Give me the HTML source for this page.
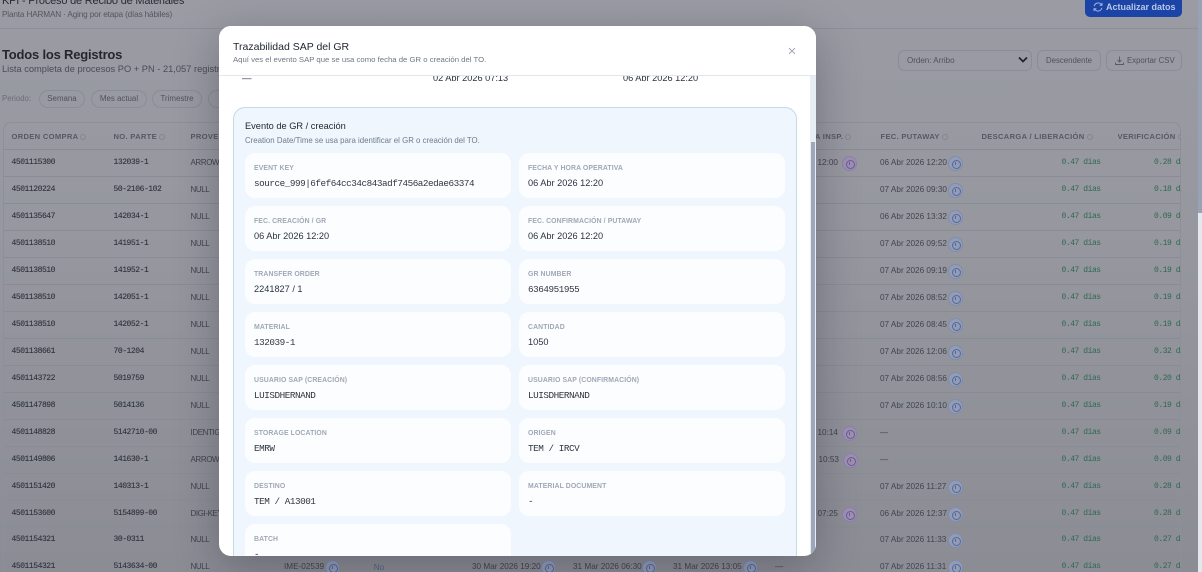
<!DOCTYPE html>
<html lang="es"><head><meta charset="utf-8"><title>Trazabilidad SAP del GR</title>
<style>
html,body{margin:0;padding:0;width:1202px;height:572px;overflow:hidden;background:#989aa3}
body{font-family:"Liberation Sans",sans-serif;position:relative}
*{box-sizing:border-box}
.a{position:absolute;white-space:nowrap}
#bg{position:absolute;left:0;top:0;width:1198px;height:572px;overflow:hidden;background:linear-gradient(#9a9ba3,#96979f 40%,#8b8c94);filter:blur(.35px)}
#sb{position:absolute;left:1198px;top:0;width:4px;height:572px;background:#e4e8ee}
#sbt{position:absolute;left:1198px;top:0;width:4px;height:213px;background:#99a2b4}
.t{color:#41444e;font-size:8.2px;margin-top:.5px}
.pill{position:absolute;top:90px;height:18px;border:1px solid #8a8d98;border-radius:9px;font-size:7.9px;line-height:16px;text-align:center;color:#4f525d}
.btn{position:absolute;top:50px;height:21px;border:1px solid #8a8d98;border-radius:6px;font-size:7.8px;line-height:19px;color:#4f525d;text-align:center}
#tb{position:absolute;left:3px;top:122px;width:1178px;height:450px;border:1px solid #8d8f99;border-bottom:0;border-radius:8px 8px 0 0;overflow:hidden}
.hd{position:absolute;top:132px;font-size:7.6px;font-weight:bold;letter-spacing:.3px;color:#565964;white-space:nowrap}
.ln{position:absolute;left:4px;width:1176px;height:1px;background:#8a8c95}
.c1,.c2,.dy{position:absolute;font-family:"Liberation Mono",monospace;font-size:8px;letter-spacing:-.45px;margin-top:1px;white-space:nowrap}
.c1,.c2{color:#2f323b;-webkit-text-stroke:.1px currentColor}
.c1{left:11.5px}.c2{left:113.5px}
.c3{position:absolute;left:190.5px;font-size:8px;letter-spacing:-.4px;color:#41444e;white-space:nowrap;margin-top:.5px}
.d{position:absolute;left:880px;font-size:8.2px;color:#41444e;white-space:nowrap;margin-top:.5px}
.dy{color:#2e6a50}
.i{position:absolute;width:15px;height:15px;margin-top:1px;border-radius:50%;background:#929db5;border:1px solid #7f8db0}
.i:after{content:"";position:absolute;left:3px;top:3px;width:7px;height:7px;border:1px solid #5468a0;border-radius:50%}
.i:before{content:"";position:absolute;left:6px;top:5px;width:1px;height:3px;background:#5468a0}
.p{background:#9c92b0;border-color:#8f80ae}.p:after{border-color:#70589e}.p:before{background:#70589e}
.ic{display:inline-block;width:6px;height:6px;border:1px solid #84868f;border-radius:50%;margin-left:2px;vertical-align:-0.5px}
#modal{position:absolute;left:219px;top:26px;width:597px;height:530px;background:#fff;border-radius:12px;box-shadow:0 12px 45px rgba(15,15,30,.28);overflow:hidden}
#mh{position:absolute;left:0;top:0;width:597px;height:50px;background:#fff;border-bottom:1px solid #e3e7ec;z-index:3}
#track{position:absolute;left:591px;top:50px;width:6px;height:480px;background:#e8edf3}
#thumb{position:absolute;left:592px;top:116px;width:4px;height:414px;background:#9da8bb}
#panel{position:absolute;left:14px;top:81px;width:564px;height:449px;background:#eff6fe;border:1px solid #c3d9ec;border-bottom:0;border-radius:12px 12px 0 0;overflow:hidden}
.k{position:absolute;width:266px;height:45px;background:#fcfdff;border-radius:10px}
.k b{position:absolute;left:9px;top:12px;font-size:6.9px;letter-spacing:.1px;color:#a0a8b6;white-space:nowrap;font-weight:bold}
.k span{position:absolute;left:9px;top:25px;font-size:9.2px;color:#2b3340;white-space:nowrap}
.k span.m{font-family:"Liberation Mono",monospace;font-size:9.3px;letter-spacing:-.46px;top:25px;color:#30363f}
</style></head><body>
<div id="bg">
<div class="a" style="left:2px;top:-5px;font-size:11px;letter-spacing:-.2px;color:#2a2d36">KPI - Proceso de Recibo de Materiales</div>
<div class="a" style="left:2px;top:10px;font-size:8.2px;letter-spacing:-.15px;color:#54575f">Planta HARMAN · Aging por etapa (días hábiles)</div>
<div class="a" style="left:0;top:28px;width:1198px;height:1px;background:#8d909a"></div>
<div class="a" style="left:1085px;top:-8px;width:97px;height:25px;background:#1b44a6;border-radius:5px"></div>
<svg class="a" style="left:1093px;top:2px" width="10" height="10" viewBox="0 0 10 10" fill="none" stroke="#9fb4e0" stroke-width="1"><path d="M1.2 4.2A3.9 3.9 0 0 1 8 2.3L9 3.3M8.8 5.8A3.9 3.9 0 0 1 2 7.7L1 6.7M9 .9v2.4H6.6M1 9.1V6.7h2.4"/></svg>
<div class="a" style="left:1106px;top:2px;font-size:9px;font-weight:bold;color:#b8c6e8">Actualizar datos</div>
<div class="a" style="left:2px;top:47px;font-size:13px;letter-spacing:-.2px;font-weight:bold;color:#25272f">Todos los Registros</div>
<div class="a" style="left:2px;top:64px;font-size:9.3px;color:#4a4d57">Lista completa de procesos PO + PN - 21,057 registros</div>
<div class="a" style="left:2px;top:94px;font-size:7.8px;color:#6a6d77">Periodo:</div>
<div class="pill" style="left:39px;width:46px">Semana</div>
<div class="pill" style="left:91px;width:56px">Mes actual</div>
<div class="pill" style="left:152px;width:50px">Trimestre</div>
<div class="pill" style="left:208px;width:50px">Último</div>
<div class="btn" style="left:898px;width:134px;text-align:left;padding-left:8px;font-size:8px">Orden: Arribo</div>
<svg class="a" style="left:1018px;top:56px" width="10" height="8" viewBox="0 0 10 8" fill="none" stroke="#23252d" stroke-width="1.8"><path d="M1 1.5l4 4 4-4"/></svg>
<div class="btn" style="left:1037px;width:64px">Descendente</div>
<div class="btn" style="left:1106px;width:76px;padding-left:20px;text-align:left">Exportar CSV</div>
<svg class="a" style="left:1115px;top:56px" width="9" height="9" viewBox="0 0 9 9" fill="none" stroke="#565964" stroke-width=".9"><path d="M4.5 0.5v5.5M2.5 4l2 2 2-2M.5 6.5v2h8v-2"/></svg>
<div id="tb"></div>
<div class="hd" style="left:11.5px">ORDEN COMPRA<i class="ic"></i></div>
<div class="hd" style="left:113.5px">NO. PARTE<i class="ic"></i></div>
<div class="hd" style="left:190.5px">PROVEEDOR</div>
<div class="hd" style="left:793px">FECHA INSP.<i class="ic"></i></div>
<div class="hd" style="left:880.5px">FEC. PUTAWAY<i class="ic"></i></div>
<div class="hd" style="left:981.5px">DESCARGA / LIBERACIÓN<i class="ic"></i></div>
<div class="hd" style="left:1117.5px;width:63px;overflow:hidden">VERIFICACIÓN<i class="ic"></i></div>
<div class="ln" style="top:149px"></div><div class="ln" style="top:176px"></div><div class="ln" style="top:203px"></div><div class="ln" style="top:230px"></div><div class="ln" style="top:257px"></div><div class="ln" style="top:284px"></div><div class="ln" style="top:311px"></div><div class="ln" style="top:338px"></div><div class="ln" style="top:365px"></div><div class="ln" style="top:392px"></div><div class="ln" style="top:419px"></div><div class="ln" style="top:446px"></div><div class="ln" style="top:473px"></div><div class="ln" style="top:500px"></div><div class="ln" style="top:527px"></div><div class="ln" style="top:554px"></div>

<div class="c1" style="top:157px">4501115300</div><div class="c2" style="top:157px">132039-1</div><div class="c3" style="top:157.5px">ARROW</div><div class="a t" style="left:758px;width:80px;text-align:right;top:157.5px">06 Abr 2026 12:00</div><div class="i p" style="left:842px;top:155px"></div><div class="d" style="top:157.5px">06 Abr 2026 12:20</div><div class="i" style="left:948px;top:155px"></div><div class="dy" style="left:1061.5px;top:157px">0.47 días</div><div class="dy" style="left:1154px;top:157px;width:27px;overflow:hidden">0.28 días</div>
<div class="c1" style="top:184px">4501120224</div><div class="c2" style="top:184px">50-2106-102</div><div class="c3" style="top:184.5px">NULL</div><div class="d" style="top:184.5px">07 Abr 2026 09:30</div><div class="i" style="left:948px;top:182px"></div><div class="dy" style="left:1061.5px;top:184px">0.47 días</div><div class="dy" style="left:1154px;top:184px;width:27px;overflow:hidden">0.18 días</div>
<div class="c1" style="top:211px">4501135647</div><div class="c2" style="top:211px">142034-1</div><div class="c3" style="top:211.5px">NULL</div><div class="d" style="top:211.5px">06 Abr 2026 13:32</div><div class="i" style="left:948px;top:209px"></div><div class="dy" style="left:1061.5px;top:211px">0.47 días</div><div class="dy" style="left:1154px;top:211px;width:27px;overflow:hidden">0.09 días</div>
<div class="c1" style="top:238px">4501138510</div><div class="c2" style="top:238px">141951-1</div><div class="c3" style="top:238.5px">NULL</div><div class="d" style="top:238.5px">07 Abr 2026 09:52</div><div class="i" style="left:948px;top:236px"></div><div class="dy" style="left:1061.5px;top:238px">0.47 días</div><div class="dy" style="left:1154px;top:238px;width:27px;overflow:hidden">0.19 días</div>
<div class="c1" style="top:265px">4501138510</div><div class="c2" style="top:265px">141952-1</div><div class="c3" style="top:265.5px">NULL</div><div class="d" style="top:265.5px">07 Abr 2026 09:19</div><div class="i" style="left:948px;top:263px"></div><div class="dy" style="left:1061.5px;top:265px">0.47 días</div><div class="dy" style="left:1154px;top:265px;width:27px;overflow:hidden">0.19 días</div>
<div class="c1" style="top:292px">4501138510</div><div class="c2" style="top:292px">142051-1</div><div class="c3" style="top:292.5px">NULL</div><div class="d" style="top:292.5px">07 Abr 2026 08:52</div><div class="i" style="left:948px;top:290px"></div><div class="dy" style="left:1061.5px;top:292px">0.47 días</div><div class="dy" style="left:1154px;top:292px;width:27px;overflow:hidden">0.19 días</div>
<div class="c1" style="top:319px">4501138510</div><div class="c2" style="top:319px">142052-1</div><div class="c3" style="top:319.5px">NULL</div><div class="d" style="top:319.5px">07 Abr 2026 08:45</div><div class="i" style="left:948px;top:317px"></div><div class="dy" style="left:1061.5px;top:319px">0.47 días</div><div class="dy" style="left:1154px;top:319px;width:27px;overflow:hidden">0.19 días</div>
<div class="c1" style="top:346px">4501138661</div><div class="c2" style="top:346px">70-1204</div><div class="c3" style="top:346.5px">NULL</div><div class="d" style="top:346.5px">07 Abr 2026 12:06</div><div class="i" style="left:948px;top:344px"></div><div class="dy" style="left:1061.5px;top:346px">0.47 días</div><div class="dy" style="left:1154px;top:346px;width:27px;overflow:hidden">0.32 días</div>
<div class="c1" style="top:373px">4501143722</div><div class="c2" style="top:373px">5019759</div><div class="c3" style="top:373.5px">NULL</div><div class="d" style="top:373.5px">07 Abr 2026 08:56</div><div class="i" style="left:948px;top:371px"></div><div class="dy" style="left:1061.5px;top:373px">0.47 días</div><div class="dy" style="left:1154px;top:373px;width:27px;overflow:hidden">0.20 días</div>
<div class="c1" style="top:400px">4501147898</div><div class="c2" style="top:400px">5014136</div><div class="c3" style="top:400.5px">NULL</div><div class="d" style="top:400.5px">07 Abr 2026 10:10</div><div class="i" style="left:948px;top:398px"></div><div class="dy" style="left:1061.5px;top:400px">0.47 días</div><div class="dy" style="left:1154px;top:400px;width:27px;overflow:hidden">0.19 días</div>
<div class="c1" style="top:427px">4501148828</div><div class="c2" style="top:427px">5142710-00</div><div class="c3" style="top:427.5px">IDENTIGRAPH</div><div class="a t" style="left:758px;width:80px;text-align:right;top:427.5px">06 Abr 2026 10:14</div><div class="i p" style="left:842px;top:425px"></div><div class="d" style="top:427.5px">—</div><div class="dy" style="left:1061.5px;top:427px">0.47 días</div><div class="dy" style="left:1154px;top:427px;width:27px;overflow:hidden">0.09 días</div>
<div class="c1" style="top:454px">4501149806</div><div class="c2" style="top:454px">141630-1</div><div class="c3" style="top:454.5px">ARROW</div><div class="a t" style="left:759px;width:80px;text-align:right;top:454.5px">06 Abr 2026 10:53</div><div class="i p" style="left:843px;top:452px"></div><div class="d" style="top:454.5px">—</div><div class="dy" style="left:1061.5px;top:454px">0.47 días</div><div class="dy" style="left:1154px;top:454px;width:27px;overflow:hidden">0.09 días</div>
<div class="c1" style="top:481px">4501151420</div><div class="c2" style="top:481px">140313-1</div><div class="c3" style="top:481.5px">NULL</div><div class="d" style="top:481.5px">07 Abr 2026 11:27</div><div class="i" style="left:948px;top:479px"></div><div class="dy" style="left:1061.5px;top:481px">0.47 días</div><div class="dy" style="left:1154px;top:481px;width:27px;overflow:hidden">0.28 días</div>
<div class="c1" style="top:508px">4501153600</div><div class="c2" style="top:508px">5154899-00</div><div class="c3" style="top:508.5px">DIGI-KEY</div><div class="a t" style="left:758px;width:80px;text-align:right;top:508.5px">06 Abr 2026 07:25</div><div class="i p" style="left:842px;top:506px"></div><div class="d" style="top:508.5px">06 Abr 2026 12:37</div><div class="i" style="left:948px;top:506px"></div><div class="dy" style="left:1061.5px;top:508px">0.47 días</div><div class="dy" style="left:1154px;top:508px;width:27px;overflow:hidden">0.28 días</div>
<div class="c1" style="top:534px">4501154321</div><div class="c2" style="top:534px">30-0311</div><div class="c3" style="top:534.5px">NULL</div><div class="d" style="top:534.5px">07 Abr 2026 11:33</div><div class="i" style="left:948px;top:532px"></div><div class="dy" style="left:1061.5px;top:534px">0.47 días</div><div class="dy" style="left:1154px;top:534px;width:27px;overflow:hidden">0.27 días</div>
<div class="c1" style="top:561px">4501154321</div><div class="c2" style="top:561px">5143634-00</div><div class="c3" style="top:561.5px">NULL</div>
<div class="a t" style="left:284px;top:561.5px">IME-02539</div><div class="i" style="left:325px;top:559px"></div>
<div class="a" style="left:370px;top:561px;width:18px;height:11px;background:#8b8d95;border-radius:3px;font-size:8.2px;line-height:14px;text-align:center;color:#55657f;overflow:hidden">No</div>
<div class="a t" style="left:472px;top:561.5px">30 Mar 2026 19:20</div><div class="i" style="left:541px;top:559px"></div>
<div class="a t" style="left:573px;top:561.5px">31 Mar 2026 06:30</div><div class="i" style="left:642px;top:559px"></div>
<div class="a t" style="left:673px;top:561.5px">31 Mar 2026 13:05</div><div class="i" style="left:743px;top:559px"></div>
<div class="a t" style="left:775px;top:561.5px">—</div>
<div class="d" style="top:561.5px">07 Abr 2026 11:31</div><div class="i" style="left:948px;top:559px"></div><div class="dy" style="left:1061.5px;top:561px">0.47 días</div><div class="dy" style="left:1154px;top:561px;width:27px;overflow:hidden">0.27 días</div>
</div>
<div id="sb"></div><div id="sbt"></div>

<div id="modal">
<div id="mh">
<div class="a" style="left:14px;top:15px;font-size:10.5px;color:#1f2530">Trazabilidad SAP del GR</div>
<div class="a" style="left:14px;top:29px;font-size:7.75px;color:#6f7785">Aquí ves el evento SAP que se usa como fecha de GR o creación del TO.</div>
<svg class="a" style="left:569px;top:21px" width="8" height="8" viewBox="0 0 8 8" fill="none" stroke="#a0a7b2" stroke-width=".9"><path d="M1 1l6 6M7 1L1 7"/></svg>
</div>
<div class="a" style="left:23px;top:47px;font-size:9.5px;color:#2b3340">—</div>
<div class="a" style="left:214px;top:47px;font-size:9.2px;color:#2b3340">02 Abr 2026 07:13</div>
<div class="a" style="left:404px;top:47px;font-size:9.2px;color:#2b3340">06 Abr 2026 12:20</div>
<div id="panel">
<div class="a" style="left:11px;top:13px;font-size:9.25px;color:#1f2530">Evento de GR / creación</div>
<div class="a" style="left:11px;top:28px;font-size:7.85px;color:#6f7a8a">Creation Date/Time se usa para identificar el GR o creación del TO.</div>
<div class="k" style="left:11px;top:45px"><b>EVENT KEY</b><span class="m">source_999|6fef64cc34c843adf7456a2edae63374</span></div>
<div class="k" style="left:285px;top:45px"><b>FECHA Y HORA OPERATIVA</b><span>06 Abr 2026 12:20</span></div>
<div class="k" style="left:11px;top:98px"><b>FEC. CREACIÓN / GR</b><span>06 Abr 2026 12:20</span></div>
<div class="k" style="left:285px;top:98px"><b>FEC. CONFIRMACIÓN / PUTAWAY</b><span>06 Abr 2026 12:20</span></div>
<div class="k" style="left:11px;top:151px"><b>TRANSFER ORDER</b><span>2241827 / 1</span></div>
<div class="k" style="left:285px;top:151px"><b>GR NUMBER</b><span class="m">6364951955</span></div>
<div class="k" style="left:11px;top:204px"><b>MATERIAL</b><span class="m">132039-1</span></div>
<div class="k" style="left:285px;top:204px"><b>CANTIDAD</b><span>1050</span></div>
<div class="k" style="left:11px;top:257px"><b>USUARIO SAP (CREACIÓN)</b><span class="m">LUISDHERNAND</span></div>
<div class="k" style="left:285px;top:257px"><b>USUARIO SAP (CONFIRMACIÓN)</b><span class="m">LUISDHERNAND</span></div>
<div class="k" style="left:11px;top:310px"><b>STORAGE LOCATION</b><span class="m">EMRW</span></div>
<div class="k" style="left:285px;top:310px"><b>ORIGEN</b><span class="m">TEM / IRCV</span></div>
<div class="k" style="left:11px;top:363px"><b>DESTINO</b><span class="m">TEM / A13001</span></div>
<div class="k" style="left:285px;top:363px"><b>MATERIAL DOCUMENT</b><span class="m">-</span></div>
<div class="k" style="left:11px;top:416px"><b>BATCH</b><span class="m">-</span></div>
</div>
<div id="track"></div><div id="thumb"></div>
</div>
</body></html>
